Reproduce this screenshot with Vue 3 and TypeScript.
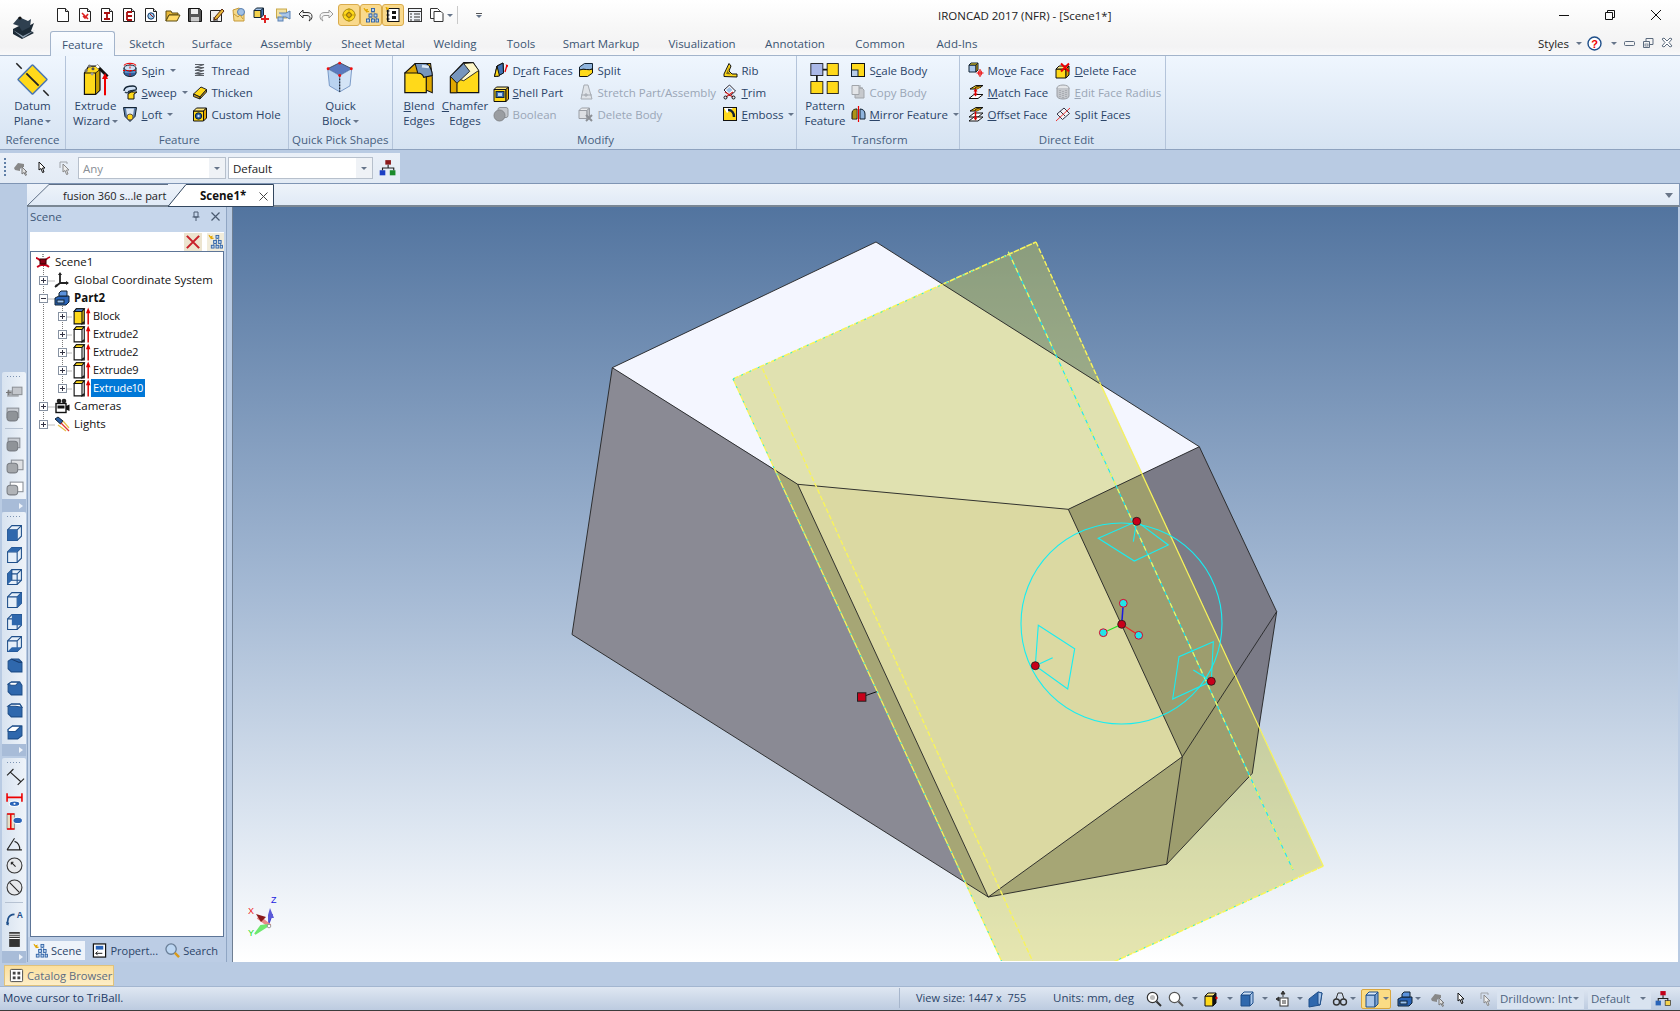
<script setup lang="ts">
import { h } from 'vue'

const cube = (x: number, y: number, w: number, ht: number, d: number, front: string, top: string, side: string, st = '#111', sw = 1) =>
  `<g stroke="${st}" stroke-width="${sw}" stroke-linejoin="round"><path d="M${x} ${y + d}h${w}v${ht}h${-w}z" fill="${front}"/><path d="M${x} ${y + d}l${d} ${-d}h${w}l${-d} ${d}z" fill="${top}"/><path d="M${x + w} ${y + d}l${d} ${-d}v${ht}l${-d} ${d}z" fill="${side}"/></g>`
const Y = '#ffd91a'
const Y2 = '#e0a800'
const B = '#3f72b5'
const B2 = '#a9c6ea'
const doc = (inner: string) => `<path d="M2.5 1.5h8l3 3v10h-11z" fill="#fff" stroke="#222"/><path d="M10.5 1.5v3h3" fill="#ddd" stroke="#222"/>${inner}`
const viewCube = (inner: string) => `<path d="M1.5 5.5l4-4h9v10l-4 4h-9z" fill="#e6eff9" stroke="#1f4f8a"/><path d="M1.5 5.5h9v10M10.5 5.5l4-4" fill="none" stroke="#1f4f8a"/>${inner}`
const greyStack = (n: number) => `<rect x="${5 - n}" y="2" width="11" height="9" fill="#c9cdd3" stroke="#8a8f96"/><rect x="1" y="5" width="10" height="9" rx="3" fill="#8f9398" stroke="#7a7e84"/>`
const featureIcon = (front: string, top: string) => `<path d="M1 4L3 1.500h7V15H1z" fill="${front}" stroke="#111"/><path d="M1 4L3 1.500h7L8 4z" fill="${top}" stroke="#111"/><path d="M8 4V15l2-2" fill="none" stroke="#111"/><path d="M13.500 4.500V15.500" stroke="#d00" stroke-width="1.300"/><path d="M11.500 5.500l2-5 2 5z" fill="#d00"/>`

const icons: Record<string, string> = {
  spin: `<ellipse cx="8" cy="11" rx="6" ry="3.5" fill="#2f5f9e" stroke="#123"/><path d="M2 6v5h12V6z" fill="#5d8dc8"/><path d="M2 6v5M14 6v5" stroke="#123"/><ellipse cx="8" cy="6" rx="6" ry="3" fill="#cfe0f4" stroke="#123"/><path d="M2 3.5C4 .5 12 .5 14 3.5" fill="none" stroke="#e00" stroke-width="1.2"/><path d="M8 1v14" stroke="#e00" stroke-dasharray="2 1.5"/><path d="M1 8.5h14" stroke="#e00" stroke-dasharray="2 1.5"/>`,
  sweep: `<path d="M2 7c0-5 6-5 9-5 3 0 4 2 3 4l-6 1c-2 0-2 2 0 2" fill="#cfe0f4" stroke="#123" stroke-width="1.3"/><path d="M3 8c2 2 5 0 8-1" fill="none" stroke="#345" stroke-width="1.6"/><path d="M6 10l3-2h6l-3 2v5H6z" fill="${Y}" stroke="#111"/>`,
  loft: `<path d="M1.5 1.5h13l-1.5 9-5 5-5-5z" fill="#5f7fa8" stroke="#123"/><path d="M4 2.5h8l-1 7H5z" fill="#dbe6f3"/><circle cx="8" cy="11" r="3" fill="${Y}" stroke="#654"/>`,
  thread: `<path d="M3 2.5h9l-9 3h9l-9 3h9l-9 3h9l-9 2h9" fill="none" stroke="#5a5f66" stroke-width="1.100"/>`,
  thicken: `<path d="M1.5 10L9 3l5.5 2.5L8 13z" fill="${Y}" stroke="#222"/><path d="M1.5 10v2.5L8 15v-2zM8 13v2l6.5-7V5.5z" fill="#c59a1a" stroke="#222"/>`,
  customhole: cube(1.5, 2, 10, 10, 3, Y, '#ffe97f', Y2) + `<circle cx="6.5" cy="10" r="3.2" fill="#2a5ea3" stroke="#123"/><circle cx="6.5" cy="10" r="1.2" fill="#cfe0f4"/>`,
  draft: `<path d="M1.5 14.5L4 4l6-3 .5 10z" fill="${Y}" stroke="#111"/><path d="M4 4l6-3 .5 10-6.5 3.5z" fill="${B}" stroke="#111"/><path d="M1.5 14.5L4 4l2.5 10z" fill="${Y}" stroke="#111"/><path d="M12 10L14 3" stroke="#e00" stroke-width="1.3"/><path d="M12.5 2.5l2.5.5-.5 2.5z" fill="#e00"/>`,
  shell: cube(1, 3, 12, 12, 2.5, Y, '#ffe97f', Y2) + `<rect x="3" y="7.5" width="8" height="6" fill="${B}" stroke="#123"/><rect x="5" y="9" width="4" height="3" fill="#bcd3ee"/>`,
  boolean: `<rect x="5" y="1.5" width="10" height="10" rx="2" fill="#c4c7cc" stroke="#8e9297"/><circle cx="6.5" cy="9.5" r="5.5" fill="#9a9da1" stroke="#84878b"/>`,
  split: `<path d="M1.5 5l5-3.5h8V7c-4 2-8-1-13 1z" fill="#8fb4dd" stroke="#123"/><path d="M1.5 8c5-2 9 1 13-1v4l-5 3.5h-8z" fill="${Y}" stroke="#111"/>`,
  stretch: `<path d="M3 15L6 1h4l4 14z" fill="#dfe3e8" stroke="#a6abb2"/><path d="M3 11h11M8 9v4M6 11h4" stroke="#a6abb2"/>`,
  deletebody: cube(1, 2, 8, 8, 2.5, '#dde0e4', '#eceef1', '#bfc3c8', '#9a9ea5') + `<path d="M8 9l6 6M14 9l-6 6" stroke="#8c9096" stroke-width="2"/>`,
  rib: `<path d="M2 14.5V12L7 1.5l2 2.5-2 5 3 3h5v3z" fill="${Y}" stroke="#111"/><path d="M4 12L7.5 4 6 9.5l3 3z" fill="#7c6a18"/>`,
  trim: `<path d="M2 6L7.5 1l6 6-5.5 5z" fill="#fff" stroke="#223"/><path d="M4 6l3.5-3 3 3-3.5 3z" fill="#9fc0e6"/><path d="M3 8l8 5M11 8l-7 5" stroke="#c22" stroke-width="1.2"/><circle cx="3.5" cy="13.5" r="1.5" fill="none" stroke="#111"/><circle cx="11.5" cy="13.5" r="1.5" fill="none" stroke="#111"/>`,
  emboss: `<rect x="1.5" y="1.5" width="13" height="13" fill="${Y}" stroke="#111"/><path d="M2 2h9L5 7z" fill="#fff"/><path d="M6 4c4 0 6 3 6 7" fill="none" stroke="#123" stroke-width="2.4"/>`,
  scale: `<rect x="1.5" y="1.5" width="13" height="13" fill="${Y}" stroke="#111"/><rect x="1.5" y="8" width="6.5" height="6.5" fill="#b9cde8" stroke="#123"/>`,
  copy: `<path d="M5 4h7l2 2v8H5z" fill="#c6c9cd" stroke="#a1a5aa"/><path d="M2 1.5h7v9H2z" fill="#e3e5e8" stroke="#a1a5aa"/><path d="M10 1v3h3" fill="none" stroke="#a1a5aa"/>`,
  mirror: `<path d="M7 3c-4 0-5 2-5 5v5h5z" fill="${Y}" stroke="#111"/><path d="M3 5v7M5 3.5V12" stroke="#111" stroke-width=".7"/><path d="M10 3c3 0 5 2 5 5v5h-5z" fill="#8fb4dd" stroke="#123"/><path d="M8.5 0v16" stroke="#e00" stroke-width="1.2"/>`,
  moveface: cube(1, 1, 7, 7, 2, B2, Y, Y2, '#123') + `<path d="M12 7v8M8.5 11h7" stroke="#e00"/><path d="M10.5 9h3v4h-3z" fill="none" stroke="#e00" stroke-width=".7"/>`,
  matchface: `<path d="M2 5l6-3.5h7l-6 3.5z" fill="${Y}" stroke="#111"/><path d="M7 5c0-3 5-3 6-1" fill="#e09a00" stroke="#111"/><path d="M1 14.5l5-4h9l-5 4z" fill="#fff" stroke="#111"/><path d="M7.5 5.5v6" stroke="#d00" stroke-width="1.5"/><path d="M5.5 7.5l2-3 2 3zM5.5 9.5l2 3 2-3z" fill="#d00"/>`,
  offsetface: `<path d="M2 5l6-3.5h7l-6 3.5z" fill="${Y}" stroke="#111"/><path d="M7 5c0-3 5-3 6-1" fill="#e09a00" stroke="#111"/><path d="M1 11l5-4h9l-5 4z" fill="#fff" stroke="#111"/><path d="M1 15l5-4h9l-5 4z" fill="#fff" stroke="#111"/><path d="M7.5 5.5v8" stroke="#d00" stroke-width="1.4"/><path d="M5.5 11.5l2 3 2-3z" fill="#d00"/>`,
  deleteface: cube(1, 4, 10, 9, 3, Y, '#ffe97f', Y2) + `<path d="M6 1.5l8 8M14 1.5l-8 8" stroke="#e00" stroke-width="2"/>`,
  editradius: `<ellipse cx="8" cy="4" rx="6" ry="3" fill="#e4e6e9" stroke="#9ca0a6"/><path d="M2 4v8c0 4 12 4 12 0V4" fill="#c4c7cc" stroke="#9ca0a6"/><path d="M5 6v8M8 7v8M11 6v8" stroke="#8e9298" stroke-dasharray="1 1"/>`,
  splitfaces: `<path d="M2 8L9 2l5.5 5.5-7 6z" fill="#f2f4f8" stroke="#334"/><path d="M5 5l5 5" stroke="#334"/><path d="M1 15L15 2" stroke="#e33"/>`,
  datum: `<rect x="10.5" y="10.5" width="27" height="27" rx="1" transform="rotate(45 24 24)" fill="${Y}" stroke="#4a76b3" stroke-width="2"/><path d="M16 16L32 32" stroke="#222" stroke-width="2.4"/><path d="M3 3L10 10M38 38l7 7" stroke="#222" stroke-width="2"/>`,
  extrude: `<path d="M5 14l5-8h10l3 4v24l-5 5H5z" fill="${Y}" stroke="#111" stroke-width="1.4"/><path d="M5 14h13v25" fill="none" stroke="#111" stroke-width="1.2"/><path d="M18 14v25l5-5V10z" fill="#c9a000" stroke="#111"/><circle cx="11" cy="6" r="1.8" fill="#777"/><circle cx="15" cy="9" r="1.8" fill="#555"/><circle cx="7" cy="11" r="1.8" fill="#777"/><circle cx="14" cy="15" r="1.8" fill="#999"/><path d="M19 5l13 13" stroke="#111" stroke-width="3.4"/><path d="M19 5l3 3" stroke="#fff" stroke-width="3"/><path d="M29 18v22" stroke="#e00" stroke-width="2.4"/><path d="M25.5 21l3.5-7 3.5 7z" fill="#e00"/>`,
  quick: `<path d="M17 2l14 7-14 8-14-8z" fill="#5a79bf" stroke="#345"/><path d="M3 9l14 8v19L5 29z" fill="#b9d3f0" stroke="#6a8ec0"/><path d="M31 9l-14 8v19l12-7z" fill="#d4e4f6" stroke="#6a8ec0"/><path d="M17 17v19" stroke="#111" stroke-dasharray="2 1.5" stroke-width="1.2"/><g fill="#e11"><circle cx="17" cy="2.5" r="1.7"/><circle cx="3.5" cy="9" r="1.7"/><circle cx="30.5" cy="9" r="1.7"/><circle cx="17" cy="17" r="1.7"/></g>`,
  blend: `<path d="M2 14L14 3h18l2 16v18l-7-3z" fill="#e0a800" stroke="#111" stroke-width="1.2"/><path d="M2 14v23h25V19c0-3-2-5-5-5z" fill="${Y}" stroke="#111" stroke-width="1.4"/><path d="M17 14c3 0 6 2 7 5l10-2c0-6-3-12-7-14H14z" fill="#7796bd" stroke="#111" stroke-width="1.2"/><path d="M22 6l8 1" stroke="#dce8f5" stroke-width="3"/>`,
  chamfer: `<path d="M1.5 18v19h33V12L28 2H17z" fill="${Y}" stroke="#111" stroke-width="1.4"/><path d="M1.5 18L17 3l11-1 6.5 9L17 23z" fill="#fff8c8" stroke="#111"/><path d="M1.5 18L17 3l7 9L9 26z" fill="#7796bd" stroke="#111"/><path d="M9 26v11" stroke="#111"/><path d="M1.5 18l7.5 8v11H1.5z" fill="#e0a800" stroke="#111"/>`,
  pattern: `<rect x="2" y="3" width="14" height="14" fill="#aab8e8" stroke="#111"/><rect x="21" y="3" width="13" height="14" fill="${Y}" stroke="#111"/><rect x="2" y="24" width="14" height="14" fill="${Y}" stroke="#111"/><rect x="21" y="24" width="13" height="14" fill="${Y}" stroke="#111"/><path d="M16 10h5M9 17v7" stroke="#111" stroke-width="2"/>`,
  q0: doc(''),
  q1: doc(`<path d="M5 6l6 6M11 7l-3 4-2-2" stroke="#d22" stroke-width="1.6" fill="none"/>`),
  q2: doc(`<path d="M5 6h6M8 6v6M5 12h6" stroke="#a11" stroke-width="1.8"/>`),
  q3: doc(`<path d="M6 5v8M6 5h5M6 9h5M6 13h5" stroke="#a11" stroke-width="1.8"/>`),
  q4: doc(`<circle cx="8" cy="9" r="3.2" fill="#9fd0ef" stroke="#136"/><path d="M7 7l3 3" stroke="#a11"/>`),
  q5: `<path d="M1 4h5l1 2h6v2H4l-3 6z" fill="#e8b838" stroke="#5a4a10"/><path d="M4 8h11l-3 6H1z" fill="#ffd966" stroke="#5a4a10"/>`,
  q6: `<path d="M1.5 1.5h11l2 2v11h-13z" fill="#555" stroke="#111"/><rect x="4" y="2" width="7" height="5" fill="#eee"/><rect x="4" y="10" width="8" height="4.5" fill="#ccc"/>`,
  q7: `<path d="M1.5 3.5h11v11h-11z" fill="#eee" stroke="#222"/><rect x="4" y="10" width="5" height="4" fill="#888"/><path d="M6 10l7-8 2 2-7 8-3 1z" fill="#e8b838" stroke="#5a2a10"/>`,
  q8: `<path d="M2 3l6-2 5 4v9H3z" fill="#f5d98a" stroke="#c69a3a"/><circle cx="10" cy="5" r="3.5" fill="#9fc0e6" stroke="#5a80b0"/><path d="M3 7l4 3 2-2 3 4" fill="none" stroke="#c69a3a"/>`,
  q9: cube(1, 1, 7, 7, 2.5, '#f3d24d', '#9fc0e6', '#3f72b5', '#123') + `<path d="M12 8v8M8 12h8" stroke="#d22" stroke-width="2"/>`,
  q10: `<rect x="1.5" y="2" width="10" height="9" fill="#f3e1a0" stroke="#c9a94a"/><path d="M4 6h7l4-2v8l-4-2H8" fill="#a9c6ea" stroke="#5a80b0"/><rect x="3" y="10" width="5" height="4" fill="#a9c6ea" stroke="#5a80b0"/>`,
  q11: `<path d="M6 3L2 7l4 4V8.5h4c2 0 3 1 3 3 0 1-.5 2-1 2.5 2-1 3-2.5 3-4.5C15 6.5 13 5.5 10 5.5H6z" fill="#f4f4f4" stroke="#333"/>`,
  q12: `<path d="M10 3l4 4-4 4V8.5H6c-2 0-3 1-3 3 0 1 .5 2 1 2.5-2-1-3-2.5-3-4.5C1 6.5 3 5.5 6 5.5h4z" fill="#f4f4f4" stroke="#9a9a9a"/>`,
  q13: `<circle cx="8" cy="8" r="6" fill="#ffd91a" stroke="#a88a10"/><path d="M8 1v4M8 11v4M1 8h4M11 8h4" stroke="#c9a010"/><circle cx="8" cy="8" r="2.4" fill="#e8b000" stroke="#7a5f10"/>`,
  tree: `<path d="M1 1l1.5 3 2-2-1.5 3 3-.5" stroke="#e0a000" fill="#f1c000"/><g fill="#bcd3ee" stroke="#2a5ea3" stroke-width=".9"><rect x="8.5" y="1.5" width="3" height="3"/><rect x="6" y="7" width="3" height="3"/><rect x="11" y="7" width="3" height="3"/><rect x="3.5" y="12" width="3" height="3"/><rect x="8.5" y="12" width="3" height="3"/><rect x="13" y="12" width="2.5" height="3"/></g><path d="M10 4.5L7.5 7M10 4.5L12.5 7M7.5 10L5 12M7.5 10L10 12M12.5 10L14 12" stroke="#2a5ea3" stroke-width=".7" fill="none"/>`,
  q15: `<rect x="3" y="1.5" width="11" height="13" fill="#fff" stroke="#111"/><path d="M3 1.5h-1v13h1" fill="#111"/><path d="M1.5 4h3M1.5 8h3M1.5 12h3" stroke="#111"/><rect x="7" y="4" width="4" height="3" fill="#111"/><rect x="7" y="9" width="4" height="3" fill="#111"/><path d="M1 0l1 3 2-2" stroke="#e0a000" fill="#f1c000"/>`,
  q16: `<rect x="1.5" y="1.5" width="13" height="13" fill="#eef2f7" stroke="#333"/><path d="M1.5 4.5h13" stroke="#333"/><path d="M3 7h2M7 7h6M3 10h2M7 10h6M3 13h2M7 13h6" stroke="#333"/>`,
  q17: `<path d="M1.5 1.5h7l2 2v8h-9z" fill="#fff" stroke="#333"/><path d="M5 4.5h7l2 2v8H5z" fill="#fff" stroke="#333"/>`,
  tb: `<rect x="6.5" y="1" width="5" height="4" fill="#8b1a1a"/><rect x="1.5" y="10" width="5" height="4.5" fill="#1a3fc4"/><rect x="10.5" y="10" width="5" height="4.5" fill="#1a8b2a"/><path d="M9 5v3M4 10V8h10v2" stroke="#222" fill="none"/>`,
  tb2: `<rect x="6" y="1" width="5" height="4" fill="#c2001a"/><rect x="1.5" y="10" width="5" height="4.5" fill="#2a64b8"/><rect x="10.5" y="10" width="5" height="4.5" fill="#f3d24d" stroke="#222" stroke-width=".6"/><path d="M8.5 5v3M4 10V8h9v2" stroke="#222" fill="none"/>`,
  triw: `<path d="M4 2v8l2-1.5 1.5 4 1.5-.5-1.5-4H10z" fill="#fff" stroke="#111"/>`,
  trig: `<path d="M6 4v8l2-1.5 1.5 4 1.5-.5-1.5-4H12z" fill="#eee" stroke="#888"/><path d="M3 8V2h7v2" fill="none" stroke="#a0a4aa"/>`,
  hand: `<path d="M1 8l4-5 6 1v3h-2l-2 2v2l-5-1z" fill="#888"/><path d="M9 7v7l2-1.5 1.5 3 1-.5-1.5-3H14z" fill="#e0e0e0" stroke="#777"/>`,
  scene: `<path d="M1 4c2 0 3 2 5 3M15 3c-3 1-4 3-6 4M2 13c2-1 3-2 4-2h4c2 0 3 1 4 2" stroke="#c8001a" stroke-width="1.8" fill="none"/><rect x="5" y="5" width="6" height="5" fill="#8a0015" stroke="#300"/><path d="M8 0v4" stroke="#333" stroke-dasharray="1 1"/>`,
  axes: `<path d="M6 2v9M6 11l8 0M6 11l-5 4" stroke="#222" stroke-width="1.8"/><path d="M6 0l-2 3h4zM15 11l-3-2v4zM1 15l1-3 2 2z" fill="#222"/>`,
  part: `<path d="M1 8l4-2h10v6l-3 3H1z" fill="#2a64b8" stroke="#123"/><path d="M5 6V3l2-2h6v5H5z" fill="#5b92dc" stroke="#123"/><rect x="3" y="10" width="7" height="3" fill="#9cc2ee" stroke="#123"/>`,
  blockf: featureIcon(Y, '#4a7fc8'),
  extf: featureIcon('#fff', Y),
  cam: `<circle cx="5" cy="3" r="2.3" fill="#222"/><circle cx="10" cy="3" r="2.3" fill="#222"/><rect x="2" y="5.5" width="10" height="9" fill="#fff" stroke="#111" stroke-width="1.4"/><rect x="3.5" y="7.5" width="7" height="3" fill="#111"/><path d="M12 8l3.5-1.5V13L12 11.5z" fill="#111"/>`,
  light: `<path d="M1 3l3-2 5 4-2.5 3z" fill="#2a5ea3" stroke="#123"/><path d="M7 7L15 15" stroke="#d33" stroke-width="1.2"/><path d="M4 9l8 6M9 5l6 7" stroke="#e8c04a" stroke-width="1.2"/>`,
  del: `<path d="M1 1L15 15M15 1L1 15" stroke="#c8202a" stroke-width="2.4"/>`,
  props: `<rect x="1.5" y="1" width="13" height="14" fill="#fff" stroke="#111" stroke-width="1.3"/><rect x="4" y="3" width="8" height="4" fill="#2a64b8"/><path d="M4 11h7M4 11l2-2M4 11l2 2" stroke="#111" fill="none"/>`,
  search: `<circle cx="6.5" cy="6.5" r="5.5" fill="#bcd6f2" stroke="#6a7f98" stroke-width="1.4"/><path d="M10.5 10.5L15 15" stroke="#d99a1a" stroke-width="2.6"/>`,
  catalog: `<rect x="1.5" y="1.5" width="13" height="13" rx="1" fill="#fff" stroke="#444"/><rect x="4" y="4" width="3" height="3" fill="#444"/><rect x="9" y="4" width="3" height="3" fill="#444"/><rect x="4" y="9" width="3" height="3" fill="#444"/><rect x="9" y="9" width="3" height="3" fill="#444"/>`,
  vfront: viewCube(`<path d="M1.5 5.5h9v10h-9z" fill="#2f68ad"/>`),
  vtop: viewCube(`<path d="M1.5 5.5l4-4h9l-4 4z" fill="#2f68ad"/>`),
  vleft: viewCube(`<path d="M1.5 5.5l4-4v10l-4 4z" fill="#2f68ad"/><path d="M5.5 1.5v10h9" fill="none" stroke="#1f4f8a"/>`),
  vright: viewCube(`<path d="M10.5 5.5l4-4v10l-4 4z" fill="#2f68ad"/>`),
  vback: viewCube(`<path d="M5.5 1.5h9v10h-9z" fill="#2f68ad"/>`),
  vbot: viewCube(`<path d="M1.5 15.5l4-4h9l-4 4z" fill="#2f68ad"/>`),
  iso1: `<path d="M2 4l3-2h7l3 3v9H5L2 11z" fill="#2f68ad" stroke="#1f4f8a"/><path d="M5 2l7 3h3" stroke="#16396a" fill="none"/>`,
  iso2: `<path d="M2 4l3-2h8l2 3v9H5L2 11z" fill="#2f68ad" stroke="#1f4f8a"/><path d="M2 4l3-2h7l-3 3H5z" fill="#fff" stroke="#1f4f8a"/>`,
  iso3: `<path d="M2 4l3-2h8l2 3v9H5L2 11z" fill="#2f68ad" stroke="#1f4f8a"/><path d="M2 4l3-2h8l2 3-6-1z" fill="#fff" stroke="#1f4f8a"/>`,
  iso4: `<path d="M2 5l4-3h9v9l-4 3H2z" fill="#2f68ad" stroke="#1f4f8a"/><path d="M2 5l4-3h8L9 7H2z" fill="#fff" stroke="#1f4f8a"/>`,
  gs1: `<rect x="1" y="6" width="11" height="6" fill="#a8acb1"/><rect x="6" y="3" width="9" height="7" fill="#c4c7cc" stroke="#8e9297"/><path d="M0 8h5M2.5 5.5v5" stroke="#777"/>`,
  gs2: greyStack(4),
  gs3: greyStack(3),
  gs4: `<rect x="5" y="2" width="11" height="9" fill="#dfe1e4" stroke="#8a8f96"/><rect x="1" y="5" width="10" height="9" rx="3" fill="#a4a7ab" stroke="#7a7e84"/>`,
  gs5: `<rect x="4" y="2" width="12" height="9" fill="#fff" stroke="#8a8f96"/><rect x="1" y="5" width="10" height="9" rx="3" fill="#b0b3b7" stroke="#7a7e84"/>`,
  d1: `<path d="M4 3l10 9M1 6l6-6M11 15l6-6" stroke="#222"/>`,
  d2: `<path d="M1 2v8M15 2v8M1 6h14" stroke="#e00" stroke-width="1.5"/><ellipse cx="8" cy="12" rx="5" ry="2.6" fill="#2a64b8" stroke="#fff"/><circle cx="8" cy="12" r="1" fill="#fff"/>`,
  d3: `<rect x="1" y="1" width="7" height="14" fill="#e6dfc6" stroke="#999"/><path d="M1 1h7M1 15h7M4.5 1v14" stroke="#e00" stroke-width="1.4"/><ellipse cx="11" cy="7" rx="4.5" ry="3" fill="#2a64b8" stroke="#fff"/>`,
  d4: `<path d="M1 14h14M1 14L8 3M8 6c3 1 5 4 5 8" stroke="#222" fill="none"/>`,
  d5: `<circle cx="8" cy="8" r="7" fill="#e6e8eb" stroke="#333"/><path d="M5 5l4 4M5 5h2M5 5v2" stroke="#222"/>`,
  d6: `<circle cx="8" cy="8" r="7" fill="#e6e8eb" stroke="#333"/><path d="M3.5 3.5l9 9" stroke="#222"/>`,
  d7: `<path d="M1 15l1-6c1-3 3-4 6-4" stroke="#1f4f8a" stroke-width="1.6" fill="none"/><path d="M0 12l3 1-1 3z" fill="#1f4f8a"/><text x="10" y="8" font-size="8" font-weight="700" font-family="Liberation Sans" fill="#1f4f8a">A</text>`,
  d8: `<rect x="3" y="1" width="10" height="14" fill="#333"/><path d="M3 3h10M3 5h10M3 7h10" stroke="#fff"/>`,
  zoom1: `<circle cx="6.5" cy="6.5" r="5.2" fill="#fff" stroke="#333" stroke-width="1.2"/><circle cx="6.5" cy="6.5" r="2.5" fill="#bbb"/><path d="M10.5 10.5L15 15" stroke="#333" stroke-width="2"/>`,
  zoom2: `<circle cx="6.5" cy="6.5" r="5.2" fill="#fff" stroke="#555" stroke-width="1.2"/><path d="M10.5 10.5L15 15" stroke="#555" stroke-width="2"/>`,
  s3: cube(3, 2, 8, 10, 3, Y, '#ffe97f', '#111') + `<path d="M13 7h3M14.5 5.5v3" stroke="#e00"/>`,
  s4: cube(2, 1, 9, 11, 3, '#2f68ad', '#cfe0f4', '#a9c6ea', '#1f4f8a'),
  s5: `<path d="M8 0l2 3H6zM8 3v3M1 8l3-2v4z" fill="#333" stroke="#333"/><rect x="5" y="7" width="8" height="8" fill="#fff" stroke="#333"/><path d="M7 10h4M7 12h4" stroke="#333"/>`,
  s6: `<path d="M1 8l9-7 4 1-2 12-11 2z" fill="#2f68ad" stroke="#1f4f8a"/><path d="M10 1l4 1-2 12-2-1z" fill="#a9c6ea" stroke="#1f4f8a"/>`,
  s7: `<circle cx="4.5" cy="11" r="3" fill="none" stroke="#333" stroke-width="1.4"/><circle cx="11.5" cy="11" r="3" fill="none" stroke="#333" stroke-width="1.4"/><path d="M4 8l2-6h2M12 8L10 2H8" stroke="#333" fill="none"/>`,
  s8: cube(2, 1, 9, 12, 3, '#a9c6ea', '#dbe8f6', '#7ea4d2', '#1f4f8a'),
}

const Ico = (p: { n: string; s?: number | string }) => {
  const s = Number(p.s ?? 16)
  const isLarge = s > 24
  return h('svg', {
    width: s,
    height: s,
    viewBox: isLarge ? (p.n === 'datum' ? '0 0 48 48' : '0 0 37 42') : '0 0 16 16',
    class: 'ico',
    innerHTML: icons[p.n],
  })
}
;(Ico as any).props = ['n', 's']

const parts = (t: string): [string, string, string] => {
  const i = t.indexOf('&')
  return i < 0 ? [t, '', ''] : [t.slice(0, i), t[i + 1], t.slice(i + 2)]
}

const qat = ['q0', 'q1', 'q2', 'q3', 'q4', 'q5', 'q6', 'q7', 'q8', 'q9', 'q10', 'q11', 'q12', 'q13', 'tree', 'q15', 'q16', 'q17']
const qatOn = ['q13', 'tree', 'q15']
const tabs: [string, number][] = [['Feature', 65], ['Sketch', 64], ['Surface', 66], ['Assembly', 82], ['Sheet Metal', 92], ['Welding', 72], ['Tools', 60], ['Smart Markup', 100], ['Visualization', 102], ['Annotation', 84], ['Common', 86], ['Add-Ins', 68]]

type Item = { i: string; t: string; c?: boolean; off?: boolean }
type Col = { w: number; ind?: number; large?: { i: string; lines: string[]; c?: boolean }; items?: Item[] }
type Group = { name: string; w: number; pad: number; cols: Col[] }

const groups: Group[] = [
  { name: 'Reference', w: 66, pad: 0, cols: [{ w: 65, large: { i: 'datum', lines: ['Datum', 'Plane'], c: true } }] },
  {
    name: 'Feature', w: 222.5, pad: 5, cols: [
      { w: 49, large: { i: 'extrude', lines: ['Extrude', 'Wizard'], c: true } },
      { w: 72, ind: 2, items: [{ i: 'spin', t: 'S&pin', c: true }, { i: 'sweep', t: '&Sweep', c: true }, { i: 'loft', t: '&Loft', c: true }] },
      { w: 94, items: [{ i: 'thread', t: 'Thread' }, { i: 'thicken', t: 'Thicken' }, { i: 'customhole', t: 'Custom Hole' }] },
    ],
  },
  { name: 'Quick Pick Shapes', w: 104.5, pad: 0, cols: [{ w: 104, large: { i: 'quick', lines: ['Quick', 'Block'], c: true } }] },
  {
    name: 'Modify', w: 404, pad: 2, cols: [
      { w: 48, large: { i: 'blend', lines: ['&Blend', 'Edges'] } },
      { w: 44, large: { i: 'chamfer', lines: ['&Chamfer', 'Edges'] } },
      { w: 91, ind: 6, items: [{ i: 'draft', t: 'D&raft Faces' }, { i: 'shell', t: '&Shell Part' }, { i: 'boolean', t: 'Boolean', off: true }] },
      { w: 143, items: [{ i: 'split', t: 'Split' }, { i: 'stretch', t: 'Stretch Part/Assembly', off: true }, { i: 'deletebody', t: 'Delete Body', off: true }] },
      { w: 74, ind: 1, items: [{ i: 'rib', t: 'Rib' }, { i: 'trim', t: '&Trim' }, { i: 'emboss', t: '&Emboss', c: true }] },
    ],
  },
  {
    name: 'Transform', w: 163, pad: 3, cols: [
      { w: 50, large: { i: 'pattern', lines: ['Pattern', 'Feature'] } },
      { w: 108, items: [{ i: 'scale', t: 'S&cale Body' }, { i: 'copy', t: 'Copy Body', off: true }, { i: 'mirror', t: '&Mirror Feature', c: true }] },
    ],
  },
  {
    name: 'Direct Edit', w: 206, pad: 8, cols: [
      { w: 87, items: [{ i: 'moveface', t: 'Mo&ve Face' }, { i: 'matchface', t: '&Match Face' }, { i: 'offsetface', t: '&Offset Face' }] },
      { w: 108, items: [{ i: 'deleteface', t: '&Delete Face' }, { i: 'editradius', t: '&Edit Face Radius', off: true }, { i: 'splitfaces', t: 'Split &Faces' }] },
    ],
  },
]

const tree = [
  { t: 'Scene1', l: 0, e: '', i: 'scene' },
  { t: 'Global Coordinate System', l: 1, e: '+', i: 'axes' },
  { t: 'Part2', l: 1, e: '-', i: 'part', b: true },
  { t: 'Block', l: 2, e: '+', i: 'blockf' },
  { t: 'Extrude2', l: 2, e: '+', i: 'extf' },
  { t: 'Extrude2', l: 2, e: '+', i: 'extf' },
  { t: 'Extrude9', l: 2, e: '+', i: 'extf' },
  { t: 'Extrude10', l: 2, e: '+', i: 'extf', sel: true },
  { t: 'Cameras', l: 1, e: '+', i: 'cam' },
  { t: 'Lights', l: 1, e: '+', i: 'light' },
]

const rail = [
  ['gs1', 'gs2', '|', 'gs3', 'gs4', 'gs5'],
  ['vfront', 'vtop', 'vleft', 'vright', 'vback', 'vbot', 'iso1', 'iso2', 'iso3', 'iso4'],
  ['d1', 'd2', 'd3', 'd4', 'd5', 'd6', '|', 'd7', 'd8'],
]

const statusRaw: [string, number, number][] = [
  ['zoom1', 1154, 16], ['zoom2', 1176, 16], ['^', 1195, 6], ['s3', 1210, 16], ['^', 1230, 6], ['s4', 1247, 16], ['^', 1265, 6],
  ['s5', 1283, 16], ['^', 1300, 6], ['s6', 1316, 16], ['s7', 1340, 16], ['^', 1353, 6],
]
let stx = 1146
const statusA = statusRaw.map(([n, c, w]) => {
  const ml = c - w / 2 - stx
  stx = c + w / 2
  return { n, ml, w }
})
</script>

<template>
  <div class="app">
    <svg class="logo" viewBox="0 0 26 26" width="26" height="26">
      <path d="M2 15l8-4 4 3 9-5-3 8 3 2-12 6-9-5z" fill="#1c2a36" />
      <path d="M8 3l9 4 3-2-1 8-8 4-3-5-6-2z" fill="#2f4050" />
      <path d="M2 16l10 6 12-6-12 8z" fill="#8fa0b0" />
      <circle cx="9" cy="4" r="1.6" fill="#111" />
    </svg>

    <header class="title-row">
      <div class="qat">
        <span v-for="q in qat" :key="q" class="q-btn" :class="{ on: qatOn.includes(q) }"><Ico :n="q" /></span>
        <i class="caret q-car"></i>
        <span class="q-sep"></span>
        <span class="q-more"><b></b><i class="caret"></i></span>
      </div>
      <div class="win-title">IRONCAD 2017 (NFR) - [Scene1*]</div>
      <div class="caption">
        <span class="cap-btn"><svg width="12" height="12" viewBox="0 0 12 12"><path d="M1 6.5h10" stroke="#111" /></svg></span>
        <span class="cap-btn"><svg width="12" height="12" viewBox="0 0 12 12"><path d="M1.5 3.5h7v7h-7zM3.5 3.5v-2h7v7h-2" fill="none" stroke="#111" /></svg></span>
        <span class="cap-btn"><svg width="12" height="12" viewBox="0 0 12 12"><path d="M1 1l10 10M11 1L1 11" stroke="#111" /></svg></span>
      </div>
    </header>

    <nav class="tab-row">
      <span v-for="(t, i) in tabs" :key="t[0]" class="tab" :class="{ active: i === 0 }" :style="{ width: t[1] + 'px' }">{{ t[0] }}</span>
      <div class="tab-right">
        <span class="styles">Styles</span><i class="caret c1"></i>
        <svg class="help" width="15" height="15" viewBox="0 0 15 15"><circle cx="7.5" cy="7.5" r="6.5" fill="#fff" stroke="#1f4f8a" stroke-width="1.4" /><text x="7.5" y="11.5" text-anchor="middle" font-size="11" font-weight="700" font-family="Liberation Sans" fill="#e00">?</text></svg>
        <i class="caret c2"></i>
        <svg class="mini" width="12" height="12" viewBox="0 0 12 12"><rect x="1.5" y="4.5" width="10" height="4" rx="1" fill="none" stroke="#5c6b7e" /></svg>
        <svg class="mini" width="12" height="12" viewBox="0 0 12 12"><path d="M1.5 4.5h6v6h-6zM4 4.5V1.5h7v6H8" fill="none" stroke="#5c6b7e" /><rect x="3" y="7" width="3" height="2" fill="none" stroke="#5c6b7e" stroke-width=".7" /></svg>
        <svg class="mini last" width="12" height="12" viewBox="0 0 12 12"><path d="M1 2l2-1 3 3 3-3 2 1-3 3.5 3 3.5-2 1-3-3-3 3-2-1 3-3.5z" fill="#fff" stroke="#5c6b7e" /></svg>
      </div>
    </nav>

    <section class="ribbon">
      <div v-for="g in groups" :key="g.name" class="group" :style="{ width: g.w + 'px', paddingLeft: g.pad + 'px' }">
        <div class="cols">
          <div v-for="(c, ci) in g.cols" :key="ci" class="col" :style="{ width: c.w + 'px', paddingLeft: (c.ind ?? 0) + 'px' }">
            <div v-if="c.large" class="large">
              <span class="large-ic"><Ico :n="c.large.i" :s="c.large.i === 'datum' ? 37 : 36" /></span>
              <span v-for="(ln, li) in c.large.lines" :key="li" class="large-ln">{{ parts(ln)[0] }}<u>{{ parts(ln)[1] }}</u>{{ parts(ln)[2] }}<i v-if="c.large.c && li === 1" class="caret inl"></i></span>
            </div>
            <div v-else class="small-col">
              <div v-for="it in c.items" :key="it.t" class="small" :class="{ off: it.off }">
                <Ico :n="it.i" />
                <span class="small-t">{{ parts(it.t)[0] }}<u>{{ parts(it.t)[1] }}</u>{{ parts(it.t)[2] }}</span>
                <i v-if="it.c" class="caret sm"></i>
              </div>
            </div>
          </div>
        </div>
        <div class="g-name">{{ g.name }}</div>
      </div>
    </section>

    <section class="band">
      <div class="toolbar">
        <span class="grip-v"></span>
        <span class="tb-btn"><Ico n="hand" /></span>
        <span class="tb-btn"><Ico n="triw" /></span>
        <span class="tb-btn"><Ico n="trig" /></span>
        <div class="combo any"><span class="combo-t dim">Any</span><span class="combo-b"><i class="caret"></i></span></div>
        <div class="combo def"><span class="combo-t">Default</span><span class="combo-b"><i class="caret"></i></span></div>
        <span class="tb-last"><Ico n="tb" s="18" /></span>
      </div>
    </section>

    <section class="doc-row">
      <div class="doc-strip">
        <div class="doc-tab t1">
          <svg class="tab-shape" width="141" height="22" viewBox="0 0 141 22"><path d="M0 22L22 .5H141" fill="none" stroke="#5f6f85" /></svg>
          <span class="doc-t">fusion 360 s...le part</span>
        </div>
        <div class="doc-tab t2">
          <svg class="tab-shape" width="108" height="23" viewBox="0 0 108 23"><path d="M0 22.5L18 .5H105.5V22.5z" fill="#fff" stroke="#33475f" /></svg>
          <b>Scene1*</b>
          <svg class="doc-x" width="9" height="9" viewBox="0 0 9 9"><path d="M.5.5l8 8M8.5.5l-8 8" stroke="#444" /></svg>
        </div>
        <span class="doc-drop"></span>
      </div>
    </section>

    <main class="body">
      <aside class="rail">
        <div v-for="(sec, si) in rail" :key="si" class="rail-sec" :class="'s' + si">
          <span class="rail-grip"></span>
          <template v-for="(n, ni) in sec" :key="ni">
            <span v-if="n === '|'" class="rail-sep"></span>
            <span v-else class="rail-btn"><Ico :n="n" s="17" /></span>
          </template>
          <span class="rail-more"><em></em></span>
        </div>
      </aside>

      <aside class="panel">
        <div class="p-head">
          <span>Scene</span>
          <svg width="10" height="10" viewBox="0 0 10 10" class="pin"><path d="M3 1h4v5H3zM1.5 6h7M5 6v4" fill="none" stroke="#4a5a70" /></svg>
          <svg width="9" height="9" viewBox="0 0 9 9"><path d="M.5.5l8 8M8.5.5l-8 8" stroke="#4a5a70" stroke-width="1.2" /></svg>
        </div>
        <div class="p-search">
          <span class="p-del"><Ico n="del" s="14" /></span>
          <span class="p-tree"><Ico n="tree" s="15" /></span>
        </div>
        <div class="p-tree-box">
          <svg class="tree-lines" width="60" height="190" viewBox="0 0 60 190">
            <g stroke="#7a7a7a" stroke-dasharray="1 1" fill="none">
              <path d="M12.5 14V173M12.5 29h12M12.5 47h12M12.5 155h12M12.5 173h12" />
              <path d="M31.5 54V137M31.5 65h10M31.5 83h10M31.5 101h10M31.5 119h10M31.5 137h10" />
            </g>
          </svg>
          <div v-for="(r, ri) in tree" :key="ri" class="t-row" :class="'lv' + r.l">
            <span v-if="r.e" class="t-exp">
              <svg width="9" height="9" viewBox="0 0 9 9"><rect x=".5" y=".5" width="8" height="8" fill="#fff" stroke="#8792a2" /><path d="M2 4.5h5" stroke="#334" /><path v-if="r.e === '+'" d="M4.5 2v5" stroke="#334" /></svg>
            </span>
            <Ico :n="r.i" :s="r.l === 2 ? 18 : 16" />
            <span class="t-label" :class="{ bold: r.b, sel: r.sel }">{{ r.t }}</span>
          </div>
        </div>
        <div class="p-tabs">
          <span class="p-tab on"><Ico n="tree" s="15" />Scene</span>
          <span class="p-tab prop"><Ico n="props" s="15" />Propert...</span>
          <span class="p-tab srch"><Ico n="search" s="15" />Search</span>
        </div>
      </aside>

      <div class="viewport">
        <svg class="scene" width="1445" height="755" viewBox="233 207 1445 755">
          <defs>
            <clipPath id="plc"><rect x="233" y="207" width="1445" height="754" /></clipPath>
          </defs>
          <polygon points="876,242 612.3,367.7 797.7,484.3 1068.3,509.3 1199.3,446.7" fill="#f4f6ff" />
          <polygon points="612.3,367.7 572,634.5 988.3,897 797.7,484.3" fill="#8a8a94" />
          <polygon points="797.7,484.3 1068.3,509.3 1182.3,756.7 988.3,897" fill="#ece8e6" />
          <polygon points="1199.3,446.7 1276.7,611.7 1182.3,756.7 1068.3,509.3" fill="#7b7b87" />
          <polygon points="1276.7,611.7 1259.3,725 1252.3,773.3 1166.7,864.3 1182.3,756.7" fill="#7b7b87" />
          <polygon points="1182.3,756.7 1166.7,864.3 988.3,897" fill="#8a8a94" />
          <polygon points="733,379 1036,242 1323.3,866 1113.3,962 1002,962" fill="rgb(200,200,80)" fill-opacity=".45" clip-path="url(#plc)" />
          <g fill="none" stroke="#222" stroke-width="1" stroke-opacity=".9">
            <path d="M876 242L612.3 367.7L572 634.5L988.3 897M612.3 367.7L797.7 484.3L1068.3 509.3L1199.3 446.7L876 242" />
            <path d="M797.7 484.3L988.3 897L1182.3 756.7L1068.3 509.3M1199.3 446.7L1276.7 611.7L1182.3 756.7M1276.7 611.7L1259.3 725L1252.3 773.3L1166.7 864.3L988.3 897M1182.3 756.7L1166.7 864.3" />
          </g>
          <g fill="none" clip-path="url(#plc)">
            <path d="M1100 383.3L1323.3 866" stroke="#f8f45c" stroke-width="1.2" />
            <path d="M1036 242L1100 383.3" stroke="#f8f45c" stroke-width="1.4" stroke-dasharray="5 2" />
            <path d="M733 379L1036 242M1323.3 866L1113.3 962" stroke="#f8f45c" stroke-width="1.6" stroke-dasharray="6 1" />
            <path d="M1002 962L733 379" stroke="#f8f45c" stroke-width="1.3" />
            <path d="M733 379L1002 962" stroke="#17eaf0" stroke-width="1" stroke-dasharray="2 6" />
            <path d="M733 379L1008 255M1293 880L1113.3 962" stroke="#17eaf0" stroke-width="1" stroke-dasharray="2 7" />
            <path d="M762.3 368.3L1033 962" stroke="#f8f45c" stroke-width="1.4" stroke-dasharray="5 2" />
            <path d="M1008.3 251.7L1293 870" stroke="#17eaf0" stroke-width="1.1" />
            <path d="M1008.3 251.7L1293 870" stroke="#f8f45c" stroke-width="1.3" stroke-dasharray="5 4" />
          </g>
          <g fill="none" stroke="#17eef2" stroke-width="1.1">
            <circle cx="1121.5" cy="623.5" r="100.5" />
            <path d="M1098.3 538.3L1136.7 521.3L1168.3 545L1134.3 561zM1136.7 521.3L1133.3 541.7" />
            <path d="M1038.3 625.3L1074.7 648.7L1067.7 689L1035.3 665.7zM1035.3 665.7L1052.7 657.7" />
            <path d="M1213.3 641.7L1179 656.7L1172.7 699L1211.3 681.3zM1211.3 681.3L1193.3 670" />
          </g>
          <path d="M861.7 697L876.7 691.7" stroke="#111" />
          <rect x="857.5" y="692.8" width="8.4" height="8.4" fill="#c8001a" stroke="#222" />
          <path d="M1121.7 624.3L1123.3 603.3" stroke="#1a1ae0" stroke-width="1.5" />
          <path d="M1121.7 624.3L1103.3 632.7" stroke="#22e022" stroke-width="1.2" />
          <path d="M1121.7 624.3L1138.7 635.3" stroke="#ee2222" stroke-width="1.2" />
          <g fill="#21e4e8" stroke="#e0002a">
            <circle cx="1123.3" cy="603.3" r="3.9" />
            <circle cx="1103.3" cy="632.7" r="3.9" />
            <circle cx="1138.7" cy="635.3" r="3.9" />
          </g>
          <g fill="#c8001a" stroke="#1a1a1a" stroke-width=".8">
            <circle cx="1121.7" cy="624.3" r="4" />
            <circle cx="1136.7" cy="521.3" r="4" />
            <circle cx="1035.3" cy="665.7" r="4" />
            <circle cx="1211.3" cy="681.3" r="4" />
          </g>
          <path d="M268 925L272 914" stroke="#3a3acb" stroke-width="2" />
          <path d="M270 908l4 10-3 0-3 6 0-9z" fill="#5a5ad8" />
          <path d="M270 926L258 917" stroke="#e88a8a" stroke-width="4" />
          <path d="M256 914l10 3-5 5z" fill="#8b1a1a" />
          <path d="M269 925L255 934l6-8z" fill="#6fe86f" stroke="#6fe86f" stroke-width="2" />
          <circle cx="269" cy="926" r="1.8" fill="#fff" stroke="#777" stroke-width=".7" />
          <g font-family="Liberation Sans" font-size="9">
            <text x="271" y="903" fill="#1a1ae0">Z</text>
            <text x="248" y="914" fill="#ee2222">X</text>
            <text x="248" y="936" fill="#22dd22">Y</text>
          </g>
        </svg>
      </div>
    </main>

    <section class="catalog-row">
      <span class="catalog"><Ico n="catalog" s="15" />Catalog Browser</span>
    </section>

    <footer class="status">
      <span class="st-left">Move cursor to TriBall.</span>
      <span class="st-view">View size: 1447 x&nbsp;&nbsp;755</span>
      <span class="st-unit">Units: mm, deg</span>
      <span class="st-icons">
        <template v-for="(s, i) in statusA" :key="i">
          <i v-if="s.n === '^'" class="caret st-c" :style="{ marginLeft: s.ml + 'px' }"></i>
          <span v-else class="st-ic" :style="{ marginLeft: s.ml + 'px' }"><Ico :n="s.n" /></span>
        </template>
        <span class="st-active"><Ico n="s8" /><i class="caret"></i></span>
        <span class="st-part"><Ico n="part" /></span><i class="caret st-c2"></i>
        <span class="st-g1"><Ico n="hand" /></span>
        <span class="st-g2"><Ico n="triw" /></span>
        <span class="st-g3"><Ico n="trig" /></span>
        <span class="st-combo w1">Drilldown: Int<i class="caret"></i></span>
        <span class="st-combo w2">Default<i class="caret"></i></span>
        <span class="st-tb"><Ico n="tb2" s="17" /></span>
      </span>
    </footer>
  </div>
</template>

<style>
html, body { margin: 0; padding: 0; background: #b9cbe3; overflow: hidden; }
</style>

<style scoped>
.app {
  position: relative;
  width: 1680px;
  height: 1011px;
  overflow: hidden;
  font-family: "Open Sans", "Noto Sans", sans-serif;
  font-size: 11.5px;
  color: #2b4468;
  background: #b9cbe3;
  display: flex;
  flex-direction: column;
}
.ico { display: block; flex: none; overflow: visible; }
.logo { position: absolute; left: 11px; top: 14px; }
.caret {
  display: inline-block;
  width: 0;
  height: 0;
  border: 3px solid transparent;
  border-top: 3.5px solid #66758a;
  border-bottom: 0;
  flex: none;
}

.title-row {
  height: 28px;
  box-sizing: border-box;
  padding-top: 2px;
  display: grid;
  grid-template-columns: 938px 1fr auto;
  align-items: center;
  background: linear-gradient(#fff, #f7f7f7);
  flex: none;
}
.qat { display: flex; align-items: center; padding-left: 52px; }
.q-btn { width: 22px; height: 22px; display: flex; align-items: center; justify-content: center; box-sizing: border-box; }
.q-btn.on { background: #f9d98c; border: 1px solid #d9ab4c; border-radius: 3px; }
.q-car { margin-left: -1px; }
.q-sep { width: 1px; height: 18px; background: #c9c9c9; margin-left: 4px; }
.q-more { margin-left: 17px; width: 8px; display: flex; flex-direction: column; align-items: center; gap: 1px; }
.q-more b { width: 6px; height: 1px; background: #555; }
.win-title { color: #222; font-size: 11.5px; }
.caption { display: flex; padding-right: 1px; }
.cap-btn { width: 46px; height: 26px; display: flex; align-items: center; justify-content: center; }

.tab-row {
  height: 28px;
  flex: none;
  padding: 3px 0 0 50px;
  box-sizing: border-box;
  display: flex;
  align-items: stretch;
  background: linear-gradient(#f7f7f7, #f3f3f4 70%, #f9f9fa);
  border-bottom: 1px solid #a3b4cb;
}
.tab { display: flex; align-items: center; justify-content: center; color: #3b5472; white-space: nowrap; box-sizing: border-box; flex: none; }
.tab.active {
  background: linear-gradient(#fafcff, #eef5fd);
  border: 1px solid #a3b4cb;
  border-bottom: 0;
  border-radius: 3px 3px 0 0;
  margin-bottom: -1px;
}
.tab-right { margin-left: auto; display: flex; align-items: center; padding-right: 7px; }
.styles { color: #222; margin-right: 7px; }
.c1 { margin-right: 5px; }
.c2 { margin-left: 9px; margin-right: 6px; }
.mini { margin-right: 7px; }
.mini.last { margin-right: 0; }

.ribbon {
  height: 94px;
  flex: none;
  display: flex;
  box-sizing: border-box;
  background: linear-gradient(#eff6fe, #d6e3f2);
  border-bottom: 1px solid #8ea2bf;
}
.group {
  box-sizing: border-box;
  border-right: 1px solid #b4c4da;
  padding-top: 4px;
  display: flex;
  flex-direction: column;
  flex: none;
}
.cols { display: flex; height: 70px; }
.col { box-sizing: border-box; flex: none; }
.large { display: flex; flex-direction: column; align-items: center; }
.large-ic { height: 38px; display: flex; align-items: center; justify-content: center; }
.large-ln { line-height: 15px; white-space: nowrap; }
.caret.inl { margin-left: 2px; vertical-align: 2px; }
.small-col { margin-top: -1px; }
.small { height: 22px; display: flex; align-items: center; white-space: nowrap; }
.small-t { margin-left: 3.5px; }
.small.off { color: #9aa6b6; }
.caret.sm { margin-left: 5px; }
.g-name { text-align: center; line-height: 19px; color: #475f80; white-space: nowrap; }

.band { height: 34px; flex: none; box-sizing: border-box; padding-top: 3px; border-bottom: 1px solid #7f95b4; }
.toolbar {
  width: 400px;
  height: 30px;
  box-sizing: border-box;
  display: flex;
  align-items: center;
  background: linear-gradient(#eaf0f8, #e3ebf5);
}
.grip-v { width: 2px; height: 20px; margin-left: 4px; background: repeating-linear-gradient(#5f7ea6 0 2px, transparent 2px 4px); }
.tb-btn { width: 22px; display: flex; justify-content: center; }
.tb-btn:nth-child(2) { margin-left: 4px; }
.combo {
  height: 22px;
  box-sizing: border-box;
  display: flex;
  border: 1px solid #b7c0cc;
  background: #fff;
  align-items: center;
  margin-left: 2px;
}
.combo.any { width: 148px; }
.combo.def { width: 145px; }
.combo-t { flex: 1; padding-left: 4px; color: #222; }
.combo-t.dim { color: #8a8f96; }
.combo-b { width: 16px; height: 100%; display: flex; align-items: center; justify-content: center; background: #eff2f6; }
.tb-last { margin-left: 5px; }

.doc-row { height: 23px; flex: none; padding-left: 27px; }
.doc-strip {
  height: 23px;
  box-sizing: border-box;
  display: flex;
  background: linear-gradient(#eef3fa, #e0eaf6);
  border-bottom: 2px solid #7a8794;
  border-right: 1px solid #7f95b4;
  position: relative;
}
.doc-tab { position: relative; height: 21px; line-height: 23px; white-space: nowrap; color: #222; }
.doc-t { position: relative; font-size: 11px; }
.tab-shape { position: absolute; left: 0; top: 0; }
.t1 { width: 141px; padding-left: 36px; box-sizing: border-box; }
.t2 { width: 108px; padding-left: 32px; box-sizing: border-box; height: 23px; }
.t2 b { position: relative; font-weight: 700; color: #111; }
.doc-x { position: absolute; left: 91px; top: 8px; }
.doc-drop {
  position: absolute;
  right: 6px;
  top: 9px;
  border: 4.5px solid transparent;
  border-top: 5px solid #6a7688;
  border-bottom: 0;
}

.body { height: 755px; flex: none; display: flex; }
.rail { width: 27px; flex: none; box-sizing: border-box; padding: 165px 0 0 2px; }
.rail-sec {
  width: 24px;
  background: linear-gradient(90deg, #d8e3f0, #eef3f9);
  display: flex;
  flex-direction: column;
  align-items: center;
  border-radius: 2px 2px 0 0;
}
.rail-sec.s2 { margin-top: 2px; }
.s1 .rail-btn { height: 22.3px; }
.rail-grip { height: 9px; width: 16px; flex: none; display: block; background: radial-gradient(circle, #7c93b3 .8px, transparent 1px) 0 50% / 3px 3px repeat-x; }
.rail-btn { height: 22px; flex: none; display: flex; align-items: center; justify-content: center; }
.rail-sep { height: 8px; flex: none; width: 18px; display: flex; align-items: center; background: linear-gradient(transparent 3.5px, #b6c2d2 3.5px, #b6c2d2 4.5px, transparent 4.5px); }
.rail-more { height: 12px; width: 100%; flex: none; background: #a8bcd8; display: flex; justify-content: flex-end; align-items: center; padding-right: 3px; box-sizing: border-box; }
.rail-more em { border: 3.5px solid transparent; border-left: 4px solid #eef3f9; border-right: 0; }
.s0 .rail-more { height: 13px; }

.panel {
  width: 200px;
  flex: none;
  box-sizing: border-box;
  background: #c6d6eb;
  display: flex;
  flex-direction: column;
  border-left: 1px solid #90a6c4;
  border-right: 1px solid #90a6c4;
  position: relative;
}
.p-head { height: 22px; box-sizing: border-box; padding: 0 6px 4px 2px; display: flex; align-items: center; gap: 9px; flex: none; color: #3f5878; }
.p-head span { flex: 1; }
.pin { margin-right: 1px; }
.p-search {
  height: 19px;
  margin: 3px 2px 0;
  background: #fff;
  flex: none;
  display: flex;
  justify-content: flex-end;
  gap: 5px;
  align-items: center;
}
.p-del, .p-tree { height: 18px; display: flex; align-items: center; justify-content: center; background: #ece4cf; }
.p-del { width: 18px; }
.p-tree { background: #f1ecdb; width: 17px; }
.p-tree-box {
  position: relative;
  margin: 0 2px;
  height: 686px;
  flex: none;
  box-sizing: border-box;
  background: #fff;
  border: 1px solid #5d7597;
  padding-top: 1px;
  color: #111;
}
.tree-lines { position: absolute; left: 0; top: 0; pointer-events: none; }
.t-row { height: 18px; display: flex; align-items: center; position: relative; white-space: nowrap; }
.lv0 { padding-left: 4px; }
.lv1 { padding-left: 8px; }
.lv2 { padding-left: 27px; }
.t-exp { width: 9px; margin-right: 6px; flex: none; background: #fff; line-height: 0; }
.t-label { padding: 0 2px; margin-left: 2px; line-height: 18px; background: #fff; }
.lv2 .t-label { margin-left: 0; font-size: 11px; letter-spacing: -.1px; font-variant-numeric: proportional-nums; }
.t-label.bold { font-weight: 700; }
.t-label.sel { background: #0078d7; color: #fff; }
.p-tabs { height: 25px; flex: none; display: flex; align-items: flex-start; padding: 4px 0 0 2px; box-sizing: border-box; background: #bccde5; color: #2b4468; position: relative; font-size: 11px; }
.p-tab { display: flex; align-items: center; gap: 3px; height: 19px; white-space: nowrap; padding: 0 4px 0 3px; }
.p-tab.on { background: #eef3fa; margin-right: 4px; }
.viewport { margin-left: 5px; width: 1446px; height: 755px; flex: none; box-sizing: border-box; border-left: 1px solid #6f7f93; position: relative; }
.scene { display: block; background: linear-gradient(#52749f 0%, #a3b8d3 50%, #dde6f1 82%, #ffffff 100%); }

.catalog-row { height: 25px; flex: none; padding: 3px 0 0 4px; box-sizing: border-box; border-bottom: 1px solid #a3b6d0; }
.catalog {
  height: 21px;
  width: 110px;
  box-sizing: border-box;
  display: flex;
  align-items: center;
  gap: 3px;
  padding-left: 4px;
  background: linear-gradient(#fbdf9c, #fdeec8);
  border: 1px solid #e0c27c;
  color: #5c6c80;
  white-space: nowrap;
  font-size: 11.2px;
}
.status {
  height: 24px;
  flex: none;
  box-sizing: border-box;
  display: flex;
  align-items: center;
  background: linear-gradient(#dfe7f2, #bccbe0);
  border-bottom: 1px solid #3c3c3c;
  white-space: nowrap;
  color: #2b4468;
}
.st-left { width: 899px; padding-left: 3px; box-sizing: border-box; flex: none; color: #1e3a66; margin-top: -2px; }
.st-view { width: 154px; padding-left: 16px; box-sizing: border-box; flex: none; border-left: 1px solid #a7b6cc; line-height: 20px; font-size: 11px; margin-top: -2px; }
.st-unit { width: 93px; box-sizing: border-box; flex: none; margin-top: -2px; }
.st-icons { display: flex; align-items: center; flex: none; }
.st-ic { display: block; }
.st-active { margin-left: 5px; width: 30px; height: 20px; box-sizing: border-box; background: #fbdc85; border: 1px solid #d9a63f; border-radius: 2px; display: flex; align-items: center; gap: 3px; padding-left: 2px; }
.st-part { margin-left: 6px; }
.st-c2 { margin-left: 2px; }
.st-g1 { margin-left: 9px; }
.st-g2 { margin-left: 8px; }
.st-g3 { margin-left: 8px; }
.st-combo { height: 20px; display: flex; align-items: center; justify-content: space-between; background: #d9e3f0; box-sizing: border-box; padding: 0 5px 0 3px; color: #4d6380; margin-left: 4px; }
.w1 { width: 87px; margin-left: 3px; }
.w2 { width: 63px; }
.st-tb { margin-left: 3px; }
</style>
